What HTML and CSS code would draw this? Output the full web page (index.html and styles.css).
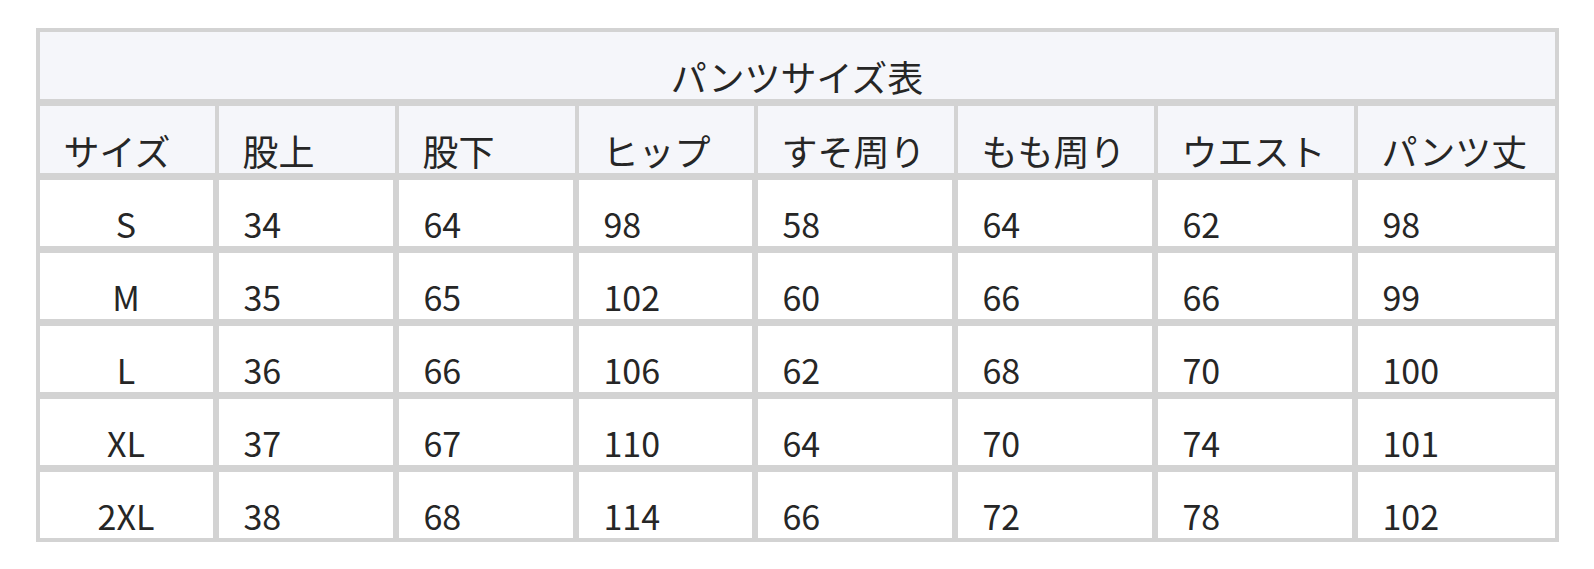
FILE: index.html
```html
<!DOCTYPE html>
<html lang="ja">
<head>
<meta charset="utf-8">
<title>パンツサイズ表</title>
<link rel="stylesheet" href="styles.css">
</head>
<body>
<table class="size-table">
  <thead>
    <tr class="title-row"><th colspan="8" class="title">パンツサイズ表</th></tr>
    <tr class="head-row">
      <th class="w1">サイズ</th>
      <th class="w2">股上</th>
      <th class="w2">股下</th>
      <th class="w1">ヒップ</th>
      <th class="w3">すそ周り</th>
      <th class="w3">もも周り</th>
      <th class="w3">ウエスト</th>
      <th class="w4">パンツ丈</th>
    </tr>
  </thead>
  <tbody>
    <tr><td class="size">S</td><td>34</td><td>64</td><td>98</td><td>58</td><td>64</td><td>62</td><td>98</td></tr>
    <tr><td class="size">M</td><td>35</td><td>65</td><td>102</td><td>60</td><td>66</td><td>66</td><td>99</td></tr>
    <tr><td class="size">L</td><td>36</td><td>66</td><td>106</td><td>62</td><td>68</td><td>70</td><td>100</td></tr>
    <tr><td class="size">XL</td><td>37</td><td>67</td><td>110</td><td>64</td><td>70</td><td>74</td><td>101</td></tr>
    <tr><td class="size">2XL</td><td>38</td><td>68</td><td>114</td><td>66</td><td>72</td><td>78</td><td>102</td></tr>
  </tbody>
</table>
</body>
</html>
```

FILE: styles.css
```css
html, body {
  margin: 0;
  padding: 0;
  background: #ffffff;
}

.size-table {
  width: 1523px;
  margin: 28px auto 0;
  border-collapse: separate;
  border-spacing: 4px 0;
  background: #d3d3d3;
  border-top: 4px solid #d3d3d3;
  border-bottom: 4px solid #d3d3d3;
  font-family: "Noto Sans CJK JP", "Noto Sans", sans-serif;
  font-size: 34px;
  color: #262626;
}

.size-table th,
.size-table td {
  box-sizing: border-box;
  padding: 21px 0 0 25px;
  line-height: 46px;
  text-align: left;
  font-weight: 400;
  vertical-align: top;
  white-space: nowrap;
  border-bottom: 7px solid #d3d3d3;
}

.size-table th {
  background: #f5f6fa;
  font-size: 36px;
  padding-left: 24px;
}

.size-table .title {
  text-align: center;
  padding-left: 0;
}

.size-table .w1 { width: 175px; }
.size-table .w2 { width: 176px; }
.size-table .w3 { width: 196px; }
.size-table .w4 { width: 197px; }

.size-table td {
  background: #ffffff;
  line-height: 45px;
  border-right: 2px solid #d3d3d3;
}

.size-table td:last-child {
  border-right: 0;
}

.size-table tbody tr:last-child td {
  border-bottom: 0;
}

.size-table td.size {
  text-align: center;
  padding-left: 0;
}
```
